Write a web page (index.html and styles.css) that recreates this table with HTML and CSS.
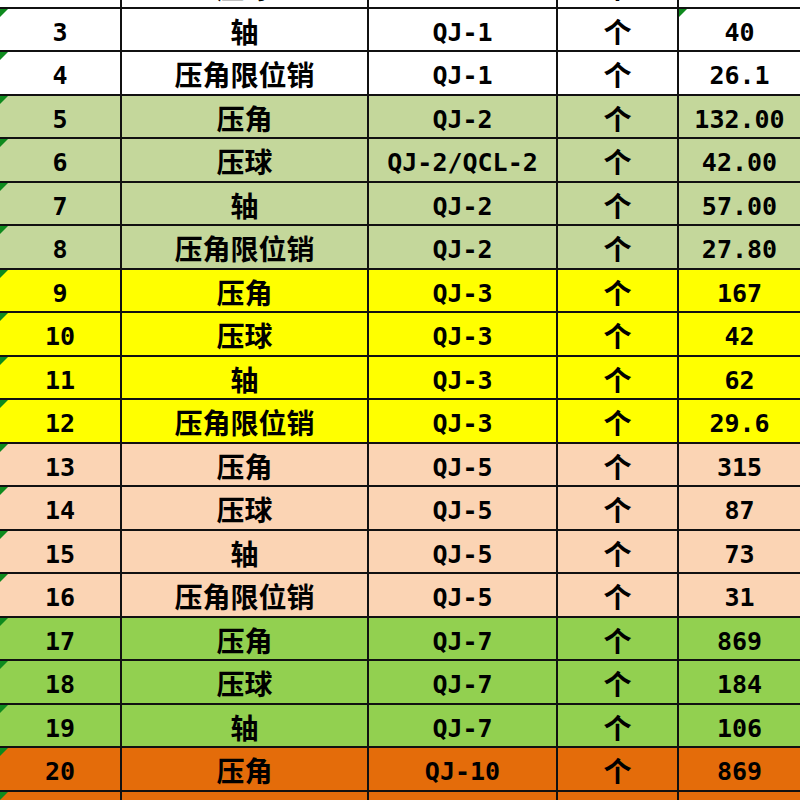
FILE: index.html
```html
<!DOCTYPE html>
<html lang="zh-CN">
<head>
<meta charset="utf-8">
<title>价格表</title>
<link rel="stylesheet" href="styles.css">
</head>
<body>
<div class="sheet">
  <div class="row white"><div class="c num mark">2</div><div class="c zh">压球</div><div class="c lat">QJ-1</div><div class="c zh">个</div><div class="c lat">35</div></div>
  <div class="row white"><div class="c num mark">3</div><div class="c zh">轴</div><div class="c lat">QJ-1</div><div class="c zh">个</div><div class="c lat mark">40</div></div>
  <div class="row white"><div class="c num mark">4</div><div class="c zh">压角限位销</div><div class="c lat">QJ-1</div><div class="c zh">个</div><div class="c lat">26.1</div></div>
  <div class="row olive"><div class="c num mark">5</div><div class="c zh">压角</div><div class="c lat">QJ-2</div><div class="c zh">个</div><div class="c lat">132.00</div></div>
  <div class="row olive"><div class="c num mark">6</div><div class="c zh">压球</div><div class="c lat">QJ-2/QCL-2</div><div class="c zh">个</div><div class="c lat">42.00</div></div>
  <div class="row olive"><div class="c num mark">7</div><div class="c zh">轴</div><div class="c lat">QJ-2</div><div class="c zh">个</div><div class="c lat">57.00</div></div>
  <div class="row olive"><div class="c num mark">8</div><div class="c zh">压角限位销</div><div class="c lat">QJ-2</div><div class="c zh">个</div><div class="c lat">27.80</div></div>
  <div class="row yellow"><div class="c num mark">9</div><div class="c zh">压角</div><div class="c lat">QJ-3</div><div class="c zh">个</div><div class="c lat">167</div></div>
  <div class="row yellow"><div class="c num mark">10</div><div class="c zh">压球</div><div class="c lat">QJ-3</div><div class="c zh">个</div><div class="c lat">42</div></div>
  <div class="row yellow"><div class="c num mark">11</div><div class="c zh">轴</div><div class="c lat">QJ-3</div><div class="c zh">个</div><div class="c lat">62</div></div>
  <div class="row yellow"><div class="c num mark">12</div><div class="c zh">压角限位销</div><div class="c lat">QJ-3</div><div class="c zh">个</div><div class="c lat">29.6</div></div>
  <div class="row peach"><div class="c num mark">13</div><div class="c zh">压角</div><div class="c lat">QJ-5</div><div class="c zh">个</div><div class="c lat">315</div></div>
  <div class="row peach"><div class="c num mark">14</div><div class="c zh">压球</div><div class="c lat">QJ-5</div><div class="c zh">个</div><div class="c lat">87</div></div>
  <div class="row peach"><div class="c num mark">15</div><div class="c zh">轴</div><div class="c lat">QJ-5</div><div class="c zh">个</div><div class="c lat">73</div></div>
  <div class="row peach"><div class="c num mark">16</div><div class="c zh">压角限位销</div><div class="c lat">QJ-5</div><div class="c zh">个</div><div class="c lat">31</div></div>
  <div class="row green"><div class="c num mark">17</div><div class="c zh">压角</div><div class="c lat">QJ-7</div><div class="c zh">个</div><div class="c lat">869</div></div>
  <div class="row green"><div class="c num mark">18</div><div class="c zh">压球</div><div class="c lat">QJ-7</div><div class="c zh">个</div><div class="c lat">184</div></div>
  <div class="row green"><div class="c num mark">19</div><div class="c zh">轴</div><div class="c lat">QJ-7</div><div class="c zh">个</div><div class="c lat">106</div></div>
  <div class="row orange"><div class="c num mark">20</div><div class="c zh">压角</div><div class="c lat">QJ-10</div><div class="c zh">个</div><div class="c lat">869</div></div>
  <div class="row orange"><div class="c num mark">21</div><div class="c zh">压球</div><div class="c lat">QJ-10</div><div class="c zh">个</div><div class="c lat">184</div></div>
</div>
</body>
</html>
```

FILE: styles.css
```css
html, body {
  margin: 0;
  padding: 0;
  background: #ffffff;
  overflow: hidden;
}

.sheet {
  margin-top: -35px;
  width: 800px;
}

.row {
  display: grid;
  grid-template-columns: 122px 247px 189px 121px 1fr;
  height: 43.5px;
  box-sizing: border-box;
  border-bottom: 2px solid #111;
}

.white { background: #ffffff; }
.olive { background: #c4d79b; }
.yellow { background: #ffff00; }
.peach { background: #fbd4b4; }
.green { background: #92d050; }
.orange { background: #e46c0a; }

.c {
  position: relative;
  display: flex;
  align-items: center;
  justify-content: center;
  box-sizing: border-box;
  border-right: 2px solid #111;
  color: #000;
  font-weight: bold;
  white-space: nowrap;
}

.c:last-child {
  border-right: none;
}

.zh {
  font-family: "Noto Sans CJK SC", "Noto Sans", sans-serif;
  font-size: 28px;
  line-height: 1.2;
  padding-top: 5px;
}

.num, .lat {
  font-family: "DejaVu Sans Mono", "Liberation Mono", monospace;
  font-size: 25px;
  line-height: 1.2;
  padding-top: 7px;
}

.mark::before {
  content: "";
  position: absolute;
  top: 0;
  left: 0;
  width: 0;
  height: 0;
  border-top: 8px solid #0e8a1e;
  border-right: 8px solid transparent;
}
```
